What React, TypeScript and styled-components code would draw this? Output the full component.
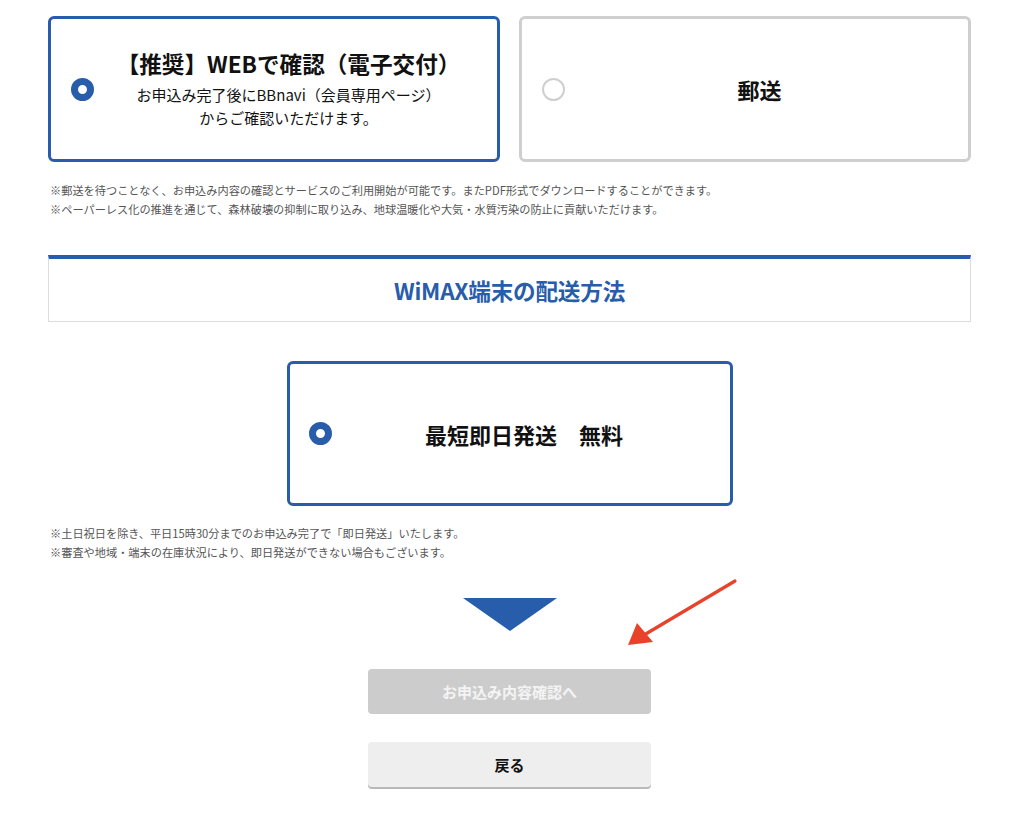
import React from "react";
import styled, { createGlobalStyle } from "styled-components";

const BLUE = "#275dab";

const Global = createGlobalStyle`
  body {
    margin: 0;
    background: #fff;
    font-family: "Noto Sans CJK JP", "Noto Sans", sans-serif;
    color: #111;
  }
`;

const Page = styled.div`
  width: 923px;
  padding: 16px 0 30px 48px;
`;

const CardRow = styled.div`
  display: grid;
  grid-template-columns: 452px 452px;
  gap: 19px;
`;

const Card = styled.label<{ $active?: boolean; $height: number }>`
  display: flex;
  align-items: center;
  box-sizing: border-box;
  height: ${(p) => p.$height}px;
  border: 3px solid ${(p) => (p.$active ? BLUE : "#cfcfcf")};
  border-radius: 6px;
  padding: 0 14px 0 20px;
  background: #fff;
`;

const Radio = styled.span<{ $checked?: boolean }>`
  flex: none;
  box-sizing: border-box;
  width: 23px;
  height: 23px;
  border-radius: 50%;
  border: ${(p) => (p.$checked ? `7px solid ${BLUE}` : "2px solid #cfcfcf")};
  background: #fff;
`;

const CardBody = styled.div`
  flex: 1;
  text-align: center;
`;

const CardTitle = styled.div`
  font-size: 22.6px;
  font-weight: 700;
  line-height: 30px;
`;

const CardSub = styled.div`
  margin-top: 4px;
  font-size: 15px;
  line-height: 23px;
`;

const Notes = styled.div<{ $mt: number }>`
  margin-top: ${(p) => p.$mt}px;
  padding-left: 2px;
  font-size: 11.2px;
  line-height: 19px;
  color: #555;
`;

const SectionHead = styled.h2`
  margin: 36px 0 0;
  box-sizing: border-box;
  height: 67px;
  border: 1px solid #dcdcdc;
  border-top: 4px solid ${BLUE};
  display: flex;
  align-items: center;
  justify-content: center;
  font-size: 22.6px;
  font-weight: 700;
  color: ${BLUE};
  letter-spacing: -0.2px;
`;

const Center = styled.div`
  display: flex;
  justify-content: center;
`;

const SingleCard = styled(Card)`
  width: 446px;
  margin-top: 39px;
  padding: 0 13px 0 19px;
`;

const BigText = styled.div`
  flex: 1;
  text-align: center;
  font-size: 22px;
  font-weight: 700;
`;

const Bottom = styled.div`
  position: relative;
  display: flex;
  flex-direction: column;
  align-items: center;
  margin-top: 36px;
`;

const Triangle = styled.div`
  width: 0;
  height: 0;
  border-left: 47px solid transparent;
  border-right: 47px solid transparent;
  border-top: 33px solid ${BLUE};
`;

const Button = styled.button<{ $variant: "disabled" | "back" }>`
  width: 283px;
  height: 45px;
  border: none;
  border-radius: 4px;
  font-family: inherit;
  font-size: 15px;
  font-weight: 700;
  cursor: pointer;
  background: ${(p) => (p.$variant === "disabled" ? "#cccccc" : "#eeeeee")};
  color: ${(p) => (p.$variant === "disabled" ? "#f4f4f4" : "#111")};
  box-shadow: ${(p) => (p.$variant === "back" ? "0 2px 0 #b8b8b8" : "none")};
`;

const FirstButton = styled(Button)`
  margin-top: 38px;
`;

const BackButton = styled(Button)`
  margin-top: 28px;
`;

const ArrowSvg = styled.svg`
  position: absolute;
  left: 570px;
  top: -21px;
`;

const RedArrow = () => (
  <ArrowSvg width="130" height="90" viewBox="0 0 130 90">
    <line x1="117" y1="4" x2="26" y2="58" stroke="#e8432a" strokeWidth="3.2" strokeLinecap="round" />
    <polygon points="10,68 19,46 35,65" fill="#e8432a" />
  </ArrowSvg>
);

export default function App() {
  return (
    <Page>
      <Global />
      <CardRow>
        <Card $active $height={146}>
          <Radio $checked />
          <CardBody>
            <CardTitle>【推奨】WEBで確認（電子交付）</CardTitle>
            <CardSub>
              お申込み完了後にBBnavi（会員専用ページ）
              <br />
              からご確認いただけます。
            </CardSub>
          </CardBody>
        </Card>
        <Card $height={146}>
          <Radio />
          <BigText>郵送</BigText>
        </Card>
      </CardRow>
      <Notes $mt={19}>
        ※郵送を待つことなく、お申込み内容の確認とサービスのご利用開始が可能です。またPDF形式でダウンロードすることができます。
        <br />
        ※ペーパーレス化の推進を通じて、森林破壊の抑制に取り込み、地球温暖化や大気・水質汚染の防止に貢献いただけます。
      </Notes>
      <SectionHead>WiMAX端末の配送方法</SectionHead>
      <Center>
        <SingleCard $active $height={145}>
          <Radio $checked />
          <BigText>最短即日発送　無料</BigText>
        </SingleCard>
      </Center>
      <Notes $mt={18}>
        ※土日祝日を除き、平日15時30分までのお申込み完了で「即日発送」いたします。
        <br />
        ※審査や地域・端末の在庫状況により、即日発送ができない場合もございます。
      </Notes>
      <Bottom>
        <RedArrow />
        <Triangle />
        <FirstButton $variant="disabled">お申込み内容確認へ</FirstButton>
        <BackButton $variant="back">戻る</BackButton>
      </Bottom>
    </Page>
  );
}
